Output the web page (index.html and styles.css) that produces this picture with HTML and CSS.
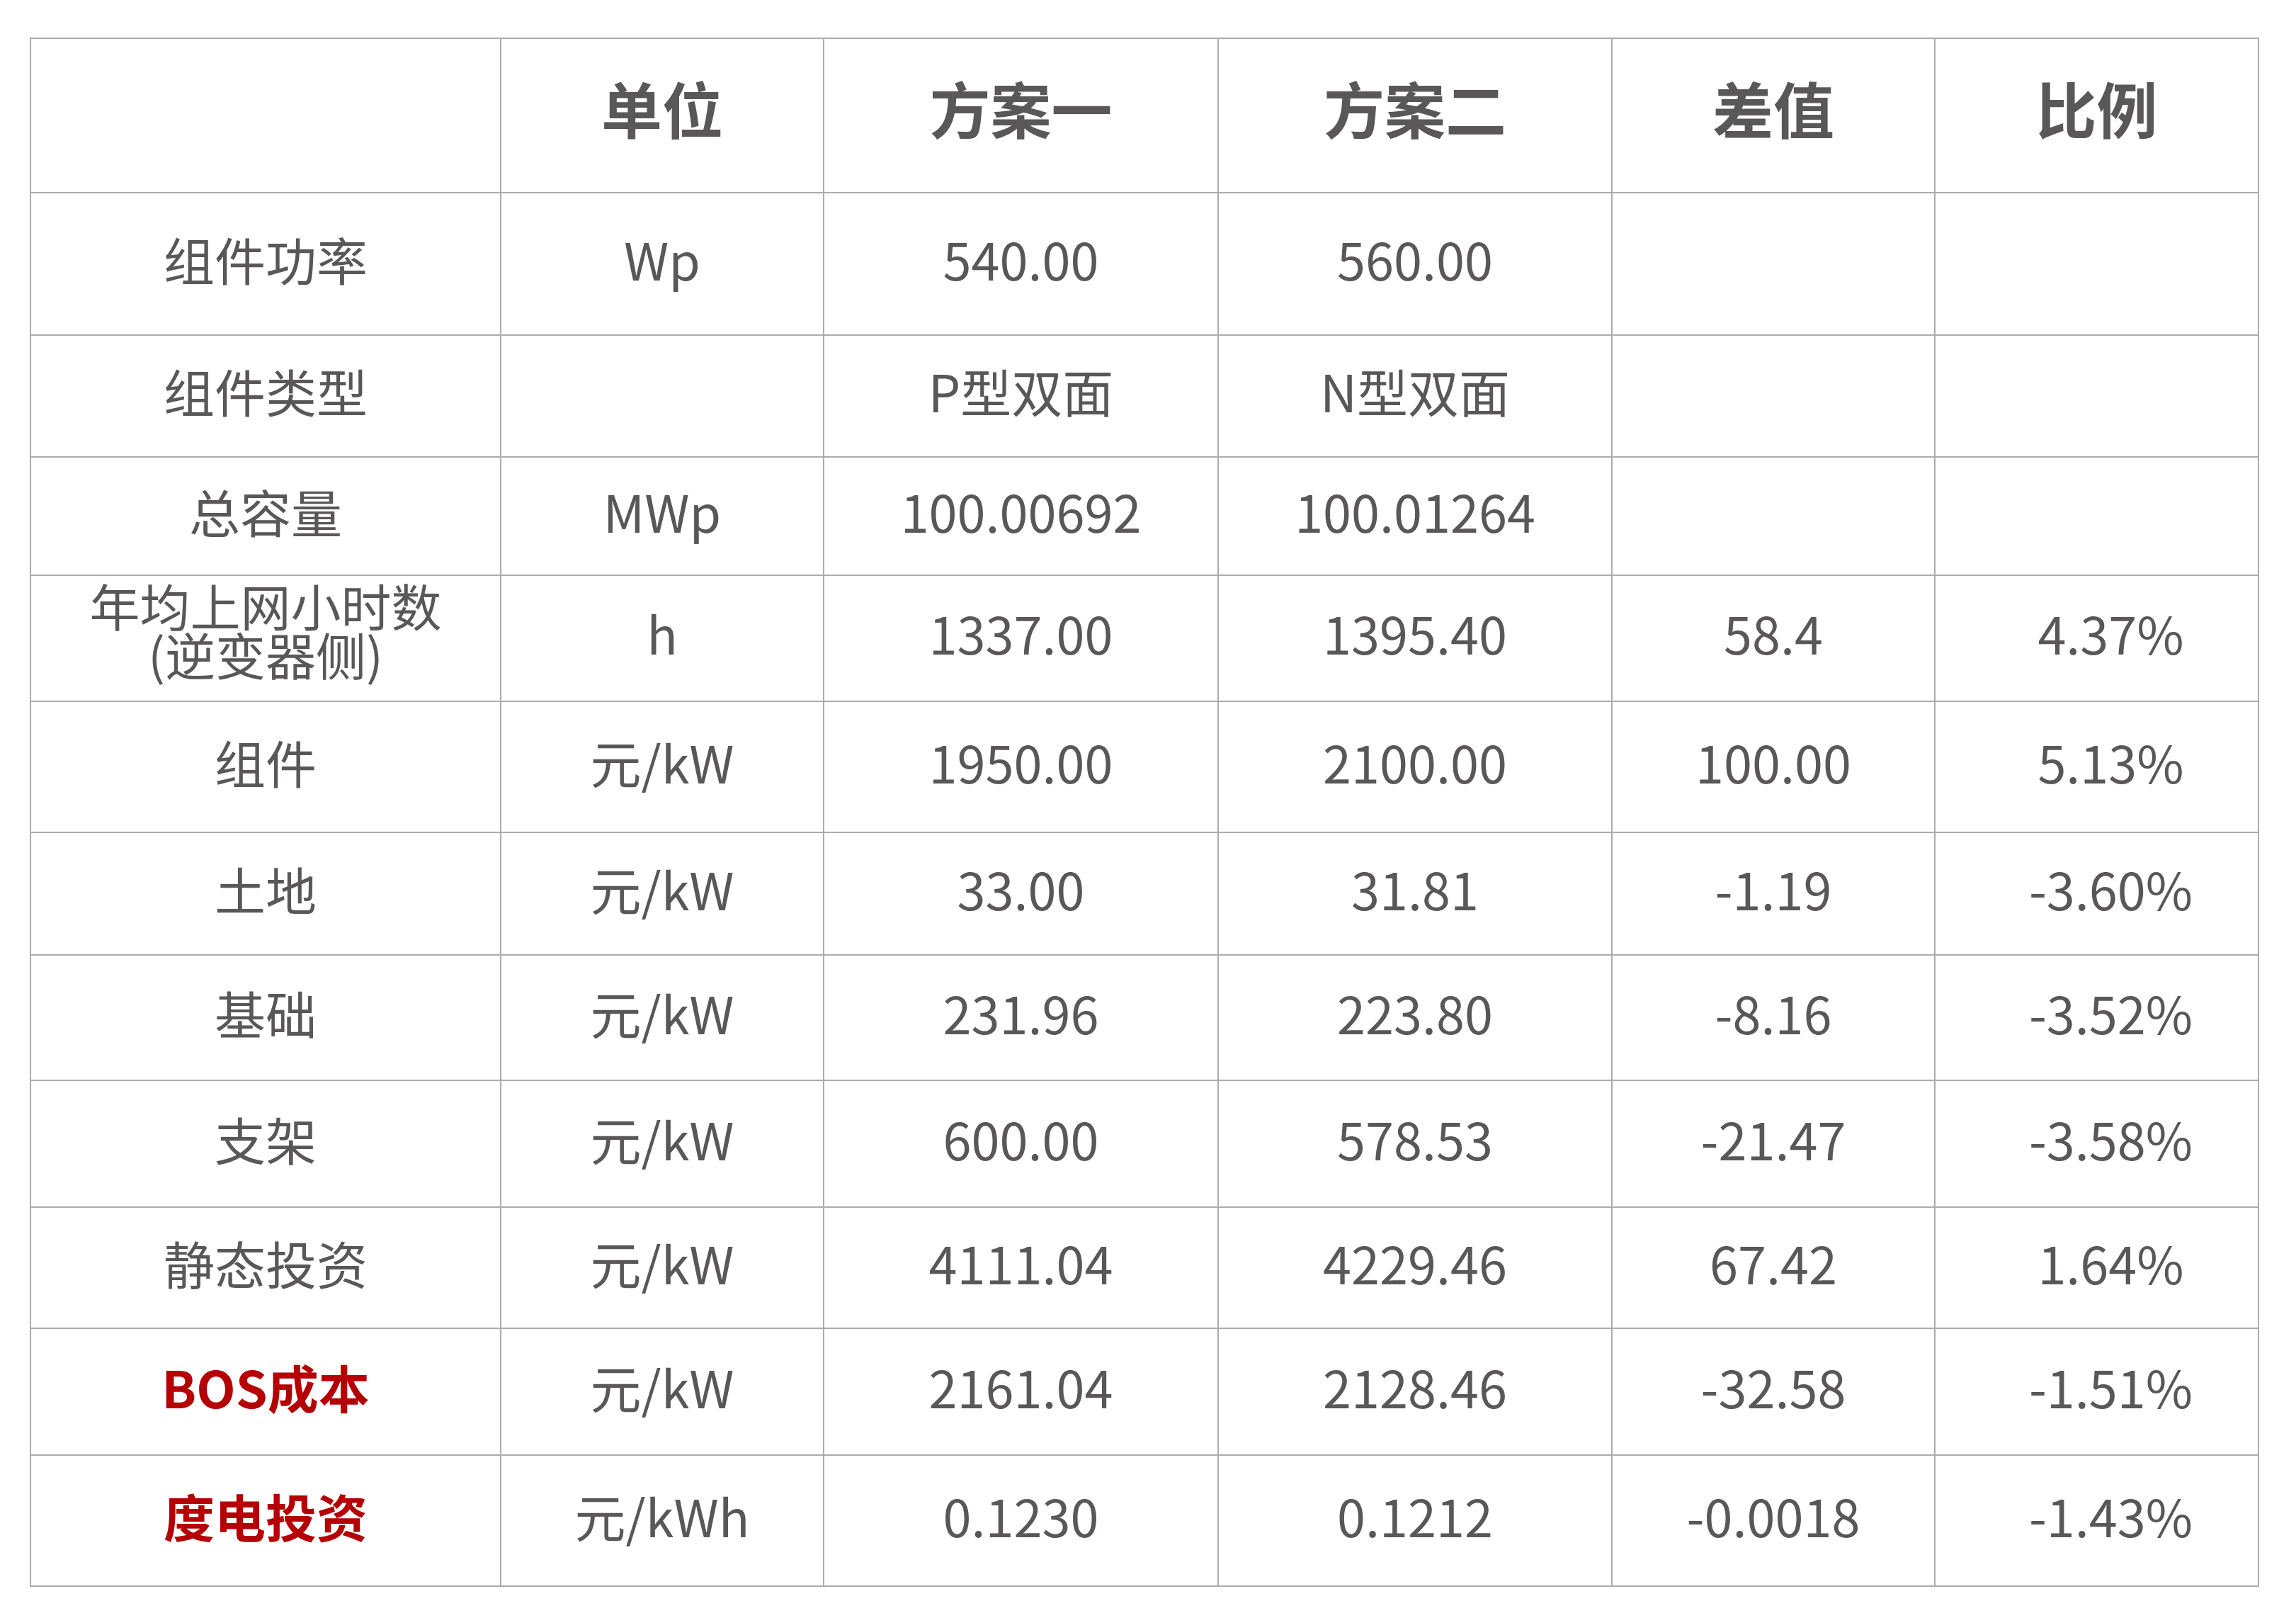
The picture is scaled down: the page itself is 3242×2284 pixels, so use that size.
FILE: index.html
```html
<!DOCTYPE html>
<html lang="zh-CN">
<head>
<meta charset="utf-8">
<title>方案对比</title>
<link rel="stylesheet" href="styles.css">
</head>
<body>
<div class="sheet">
  <div class="cell head"></div>
  <div class="cell head">单位</div>
  <div class="cell head">方案一</div>
  <div class="cell head">方案二</div>
  <div class="cell head">差值</div>
  <div class="cell head">比例</div>

  <div class="cell">组件功率</div>
  <div class="cell">Wp</div>
  <div class="cell">540.00</div>
  <div class="cell">560.00</div>
  <div class="cell"></div>
  <div class="cell"></div>

  <div class="cell">组件类型</div>
  <div class="cell"></div>
  <div class="cell">P型双面</div>
  <div class="cell">N型双面</div>
  <div class="cell"></div>
  <div class="cell"></div>

  <div class="cell">总容量</div>
  <div class="cell">MWp</div>
  <div class="cell">100.00692</div>
  <div class="cell">100.01264</div>
  <div class="cell"></div>
  <div class="cell"></div>

  <div class="cell two-line"><span>年均上网小时数<br>(逆变器侧)</span></div>
  <div class="cell">h</div>
  <div class="cell">1337.00</div>
  <div class="cell">1395.40</div>
  <div class="cell">58.4</div>
  <div class="cell ratio">4.37%</div>

  <div class="cell">组件</div>
  <div class="cell">元/kW</div>
  <div class="cell">1950.00</div>
  <div class="cell">2100.00</div>
  <div class="cell">100.00</div>
  <div class="cell ratio">5.13%</div>

  <div class="cell">土地</div>
  <div class="cell">元/kW</div>
  <div class="cell">33.00</div>
  <div class="cell">31.81</div>
  <div class="cell">-1.19</div>
  <div class="cell ratio">-3.60%</div>

  <div class="cell">基础</div>
  <div class="cell">元/kW</div>
  <div class="cell">231.96</div>
  <div class="cell">223.80</div>
  <div class="cell">-8.16</div>
  <div class="cell ratio">-3.52%</div>

  <div class="cell">支架</div>
  <div class="cell">元/kW</div>
  <div class="cell">600.00</div>
  <div class="cell">578.53</div>
  <div class="cell">-21.47</div>
  <div class="cell ratio">-3.58%</div>

  <div class="cell">静态投资</div>
  <div class="cell">元/kW</div>
  <div class="cell">4111.04</div>
  <div class="cell">4229.46</div>
  <div class="cell">67.42</div>
  <div class="cell ratio">1.64%</div>

  <div class="cell key">BOS成本</div>
  <div class="cell">元/kW</div>
  <div class="cell">2161.04</div>
  <div class="cell">2128.46</div>
  <div class="cell">-32.58</div>
  <div class="cell ratio">-1.51%</div>

  <div class="cell key">度电投资</div>
  <div class="cell">元/kWh</div>
  <div class="cell">0.1230</div>
  <div class="cell">0.1212</div>
  <div class="cell">-0.0018</div>
  <div class="cell ratio">-1.43%</div>
</div>
</body>
</html>
```

FILE: styles.css
```css
html, body {
  margin: 0;
  padding: 0;
  background: #ffffff;
}

body {
  font-family: "Noto Sans CJK SC", "Noto Sans", sans-serif;
  color: #595757;
}

.sheet {
  display: grid;
  grid-template-columns: 664px 456px 557px 556px 456px 457px;
  grid-template-rows: 218px 201px 172px 167px 178px 185px 173px 177px 179px 171px 179px 185px;
  width: max-content;
  margin: 53px 0 0 42px;
  border-top: 2px solid #acacac;
  border-left: 2px solid #acacac;
}

.cell {
  box-sizing: border-box;
  display: flex;
  align-items: center;
  justify-content: center;
  text-align: center;
  padding-bottom: 16px;
  border-right: 2px solid #acacac;
  border-bottom: 2px solid #acacac;
  font-size: 72px;
  font-weight: 400;
  line-height: 1;
  white-space: nowrap;
}

.head {
  font-size: 86px;
  font-weight: 700;
  padding-bottom: 22px;
}

.two-line {
  font-size: 71px;
  line-height: 69px;
  padding-bottom: 26px;
}

.ratio {
  padding-left: 40px;
}

.key {
  color: #b50006;
  font-weight: 700;
}
```
